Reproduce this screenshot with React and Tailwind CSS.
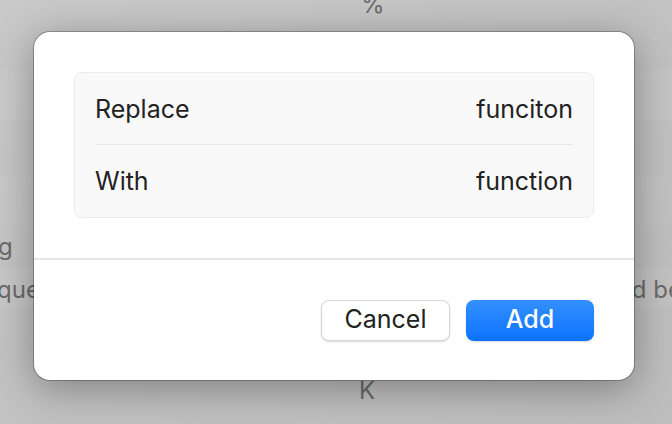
const font = { fontFamily: '"Inter", "Noto Sans", "Liberation Sans", sans-serif' };

function BackgroundPage() {
  return (
    <div className="flex h-full flex-col overflow-hidden text-[24px] text-[#6b6b6b]">
      <div className="flex h-[17px] items-end pl-[361px] leading-none">
        <span>%</span>
      </div>
      <div className="h-[53px]" />
      <div className="flex h-[50px] items-center bg-white/[0.06]">
        <span className="-ml-[12px]">s</span>
      </div>
      <div className="h-[56px]" />
      <div className="h-[50px] bg-white/[0.04]" />
      <div className="flex h-[42px] items-center">
        <span className="-ml-[2px]">g</span>
      </div>
      <div className="flex h-[40px] items-center justify-between bg-white/[0.05] pt-[4px]">
        <span className="-ml-[3px]">ques</span>
        <span className="-mr-[10px]">d be</span>
      </div>
      <div className="h-[68px]" />
      <div className="flex h-[30px] items-center pl-[359px]">
        <span>K</span>
      </div>
    </div>
  );
}

function Row({ label, value, divider }) {
  return (
    <div className="px-[20px]">
      <div
        className={`flex h-[72px] items-center justify-between pt-[2px] ${divider ? "border-b border-[#e8e8e8]" : ""}`}
      >
        <span>{label}</span>
        <span>{value}</span>
      </div>
    </div>
  );
}

export default function App() {
  return (
    <div className="relative h-[424px] w-[672px] overflow-hidden bg-gradient-to-br from-[#c9c9c9] via-[#c2c2c2] to-[#bdbdbd]" style={font}>
      <BackgroundPage />
      <div className="absolute inset-0 pl-[34px] pt-[32px]">
        <div className="flex h-[348px] w-[600px] flex-col rounded-[16px] bg-white shadow-[0_8px_40px_rgba(0,0,0,0.35)] ring-1 ring-black/25">
          <div className="px-[40px] pb-[40px] pt-[40px]">
            <div className="rounded-[8px] border border-[#ececec] bg-[#f9f9f9] text-[25px] text-[#222222]">
              <Row label="Replace" value="funciton" divider />
              <Row label="With" value="function" />
            </div>
          </div>
          <div className="h-[2px] bg-[#e6e6e6]" />
          <div className="flex justify-end gap-[16px] px-[40px] pt-[40px]">
            <button className="h-[41px] w-[129px] rounded-[8px] border border-[#d6d6d6] bg-white pb-[1px] text-[25px] text-[#222222] shadow-[0_1px_2px_rgba(0,0,0,0.15)]">
              Cancel
            </button>
            <button className="h-[41px] w-[128px] rounded-[8px] bg-gradient-to-b from-[#3390ff] to-[#0a72ff] pb-[1px] text-[25px] font-medium text-white shadow-[0_1px_2px_rgba(0,0,0,0.15)]">
              Add
            </button>
          </div>
        </div>
      </div>
    </div>
  );
}
